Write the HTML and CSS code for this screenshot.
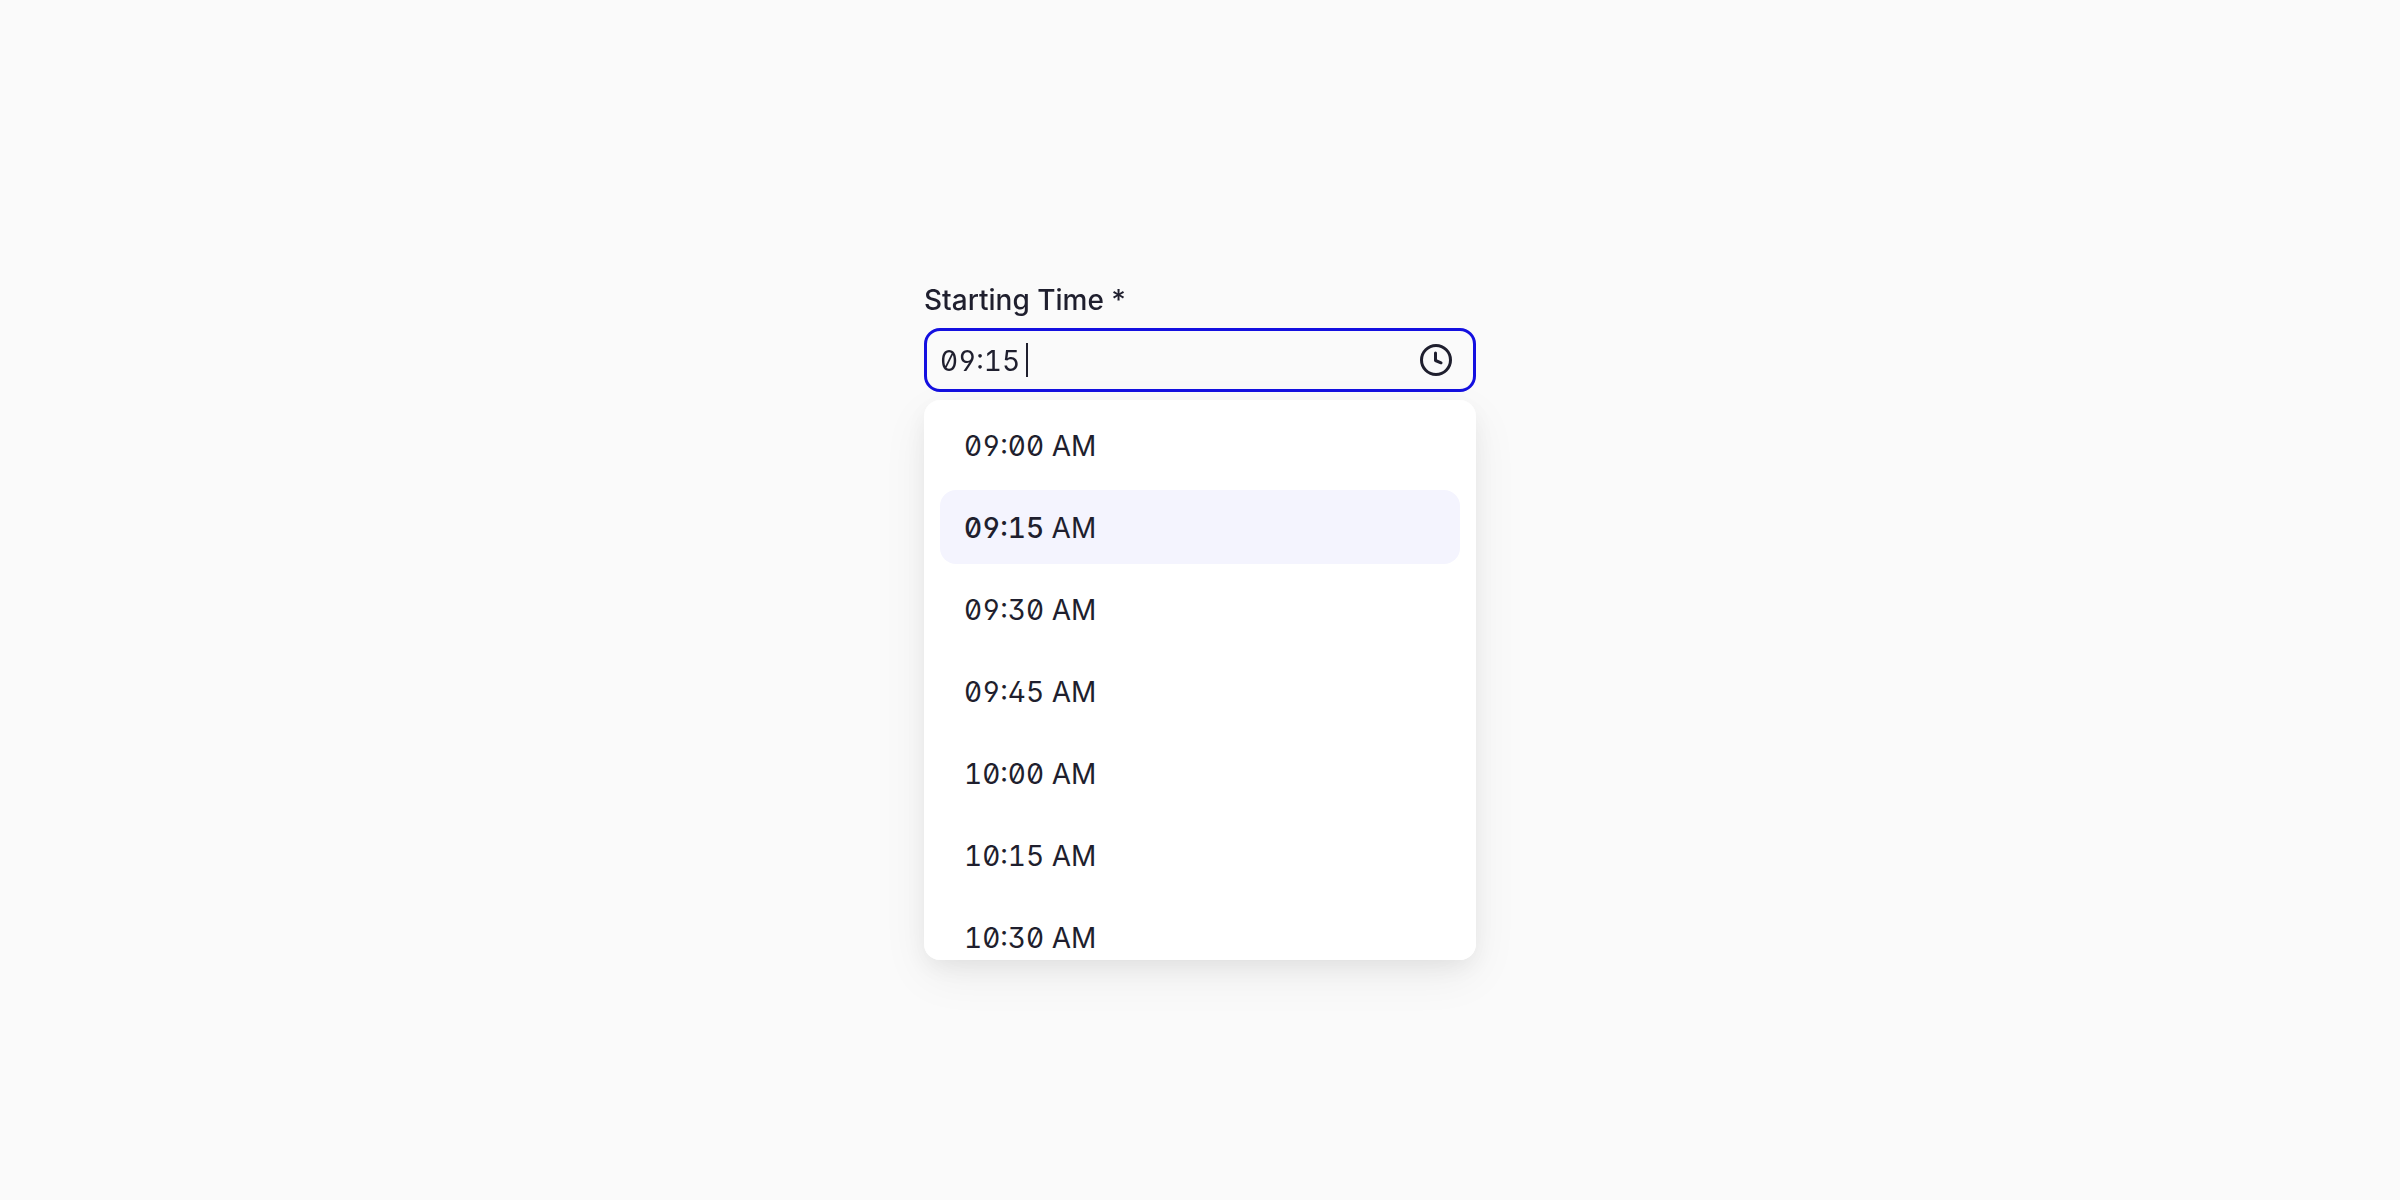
FILE: index.html
```html
<!DOCTYPE html>
<html lang="en">
<head>
    <meta charset="utf-8">
    <title>Starting Time</title>
    <link rel="stylesheet" href="styles.css">
</head>
<body>
    <div class="time-picker">
        <label for="startTime">Starting Time *</label>
        <div class="time-field">
            <input type="text" id="startTime" value="09:15" autocomplete="off" required>
            <span class="caret"></span>
            <svg class="clock" viewBox="0 0 32 32" fill="none" stroke="currentColor" stroke-width="3" stroke-linecap="round" stroke-linejoin="round">
                <circle cx="16" cy="16" r="14.5"/>
                <path d="M15.5 9v7.5l5.5 2.3"/>
            </svg>
        </div>
        <div class="time-list" role="listbox" aria-label="Starting Time">
            <button type="button" role="option">09:00 AM</button>
            <button type="button" role="option" class="active" aria-selected="true"><b>09:15</b> AM</button>
            <button type="button" role="option">09:30 AM</button>
            <button type="button" role="option">09:45 AM</button>
            <button type="button" role="option">10:00 AM</button>
            <button type="button" role="option">10:15 AM</button>
            <button type="button" role="option">10:30 AM</button>
        </div>
    </div>
</body>
</html>
```

FILE: styles.css
```css
* {
    box-sizing: border-box;
}
body {
    margin: 0;
    padding: 280px 24px 80px;
    background-color: #fafafa;
    color: #1f1f2e;
    font-family: Inter, sans-serif;
    font-size: 28px;
}
.time-picker {
    max-width: 552px;
    margin: 0 auto;
}
label {
    display: block;
    margin-bottom: 8px;
    line-height: 40px;
    font-weight: 500;
}
input, button {
    padding: 2px 0 0;
    border: none;
    background: none;
    color: inherit;
    font: inherit;
    font-feature-settings: "tnum", "zero", "ss01", "cv02", "cv03", "cv04", "cv09";
}
.time-field {
    display: flex;
    align-items: center;
    height: 64px;
    padding: 0 21px 0 13px;
    border: 3px solid #1410e0;
    border-radius: 16px;
}
.time-field input {
    field-sizing: content;
    outline: none;
}
.caret {
    width: 2px;
    height: 34px;
    margin-left: 6px;
    background-color: #1f1f2e;
}
.clock {
    width: 32px;
    height: 32px;
    margin-left: auto;
}
.time-list {
    display: flex;
    flex-direction: column;
    gap: 8px;
    max-height: 560px;
    margin-top: 8px;
    padding: 8px 16px;
    overflow-y: auto;
    scrollbar-width: none;
    border-radius: 16px;
    background-color: #fff;
    box-shadow: 0 16px 48px rgba(0, 0, 0, 0.06), 0 8px 24px -4px rgba(0, 0, 0, 0.07);
}
.time-list button {
    flex: none;
    height: 74px;
    padding: 2px 24px 0;
    border-radius: 16px;
    text-align: left;
    cursor: pointer;
}
.time-list .active {
    background-color: #f4f4fe;
}
.time-list b {
    font-weight: 500;
}
```
